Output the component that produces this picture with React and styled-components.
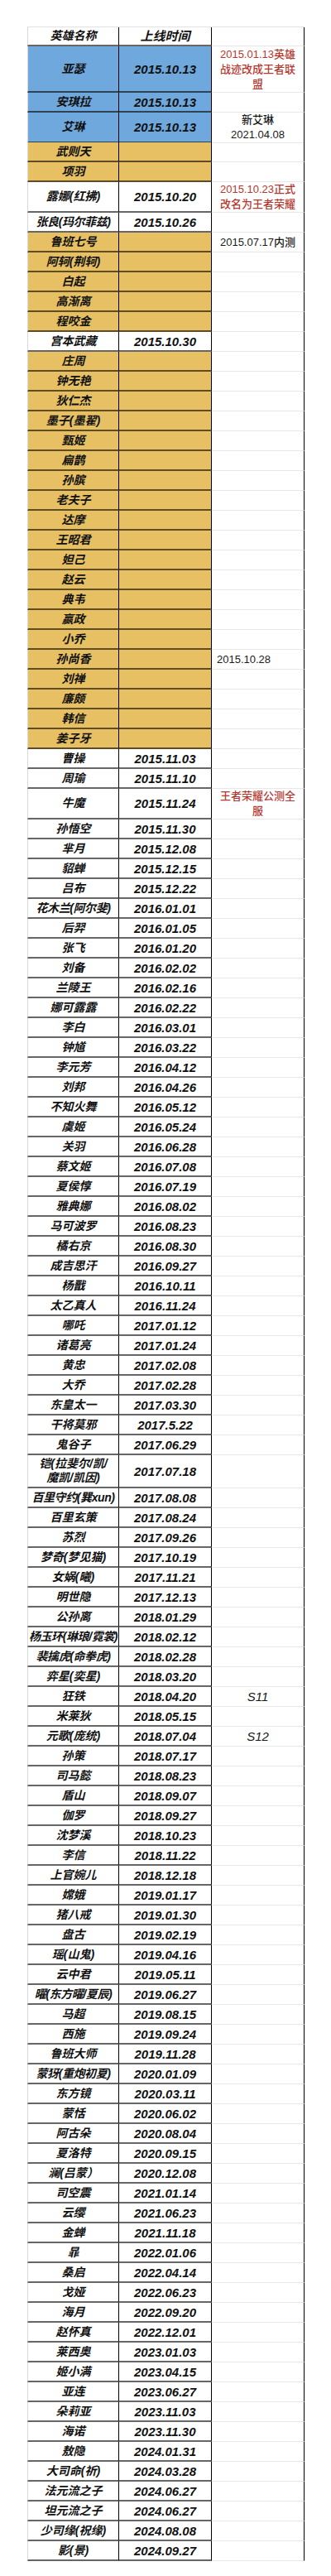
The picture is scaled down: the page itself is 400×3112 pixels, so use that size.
import React from "react";
import styled, { createGlobalStyle } from "styled-components";

const GlobalStyle = createGlobalStyle`
  html, body {
    margin: 0;
    padding: 0;
    background: #fff;
  }
  body {
    font-family: "Liberation Sans", "Noto Sans CJK SC", sans-serif;
  }
`;

const fills = {
  blue: "#6fa8dc",
  gold: "#e6c062",
  none: "#ffffff",
};

const Page = styled.div`
  padding: 32px 0 0 33px;
`;

const Sheet = styled.div`
  display: flex;
  flex-direction: column;
  width: 335px;
  border-top: 1px solid #e2e2e2;
`;

const Row = styled.div`
  display: grid;
  grid-template-columns: 111px 112px 112px;
  height: ${(p) => p.$h}px;
`;

const Cell = styled.div`
  display: flex;
  align-items: center;
  justify-content: center;
  text-align: center;
  box-sizing: border-box;
  overflow: hidden;
  background: ${(p) => fills[p.$fill || "none"]};
  border-bottom: 2px solid rgba(0, 0, 0, 0.6);
  border-right: 1px solid #000;
  font-size: 15px;
  font-style: italic;
  font-weight: 600;
  line-height: 17px;
  color: #111;
  white-space: ${(p) => (p.$wrap ? "normal" : "nowrap")};
`;

const NameCell = styled(Cell)`
  border-left: 1px solid #d8d8d8;
  font-size: 14px;
  letter-spacing: ${(p) => (p.$tight ? "-0.4px" : "0")};
`;

const NoteCell = styled.div`
  display: flex;
  align-items: center;
  justify-content: ${(p) => (p.$left ? "flex-start" : "center")};
  box-sizing: border-box;
  padding: 0 ${(p) => (p.$left ? "6px" : "3px")};
  border-bottom: 1px solid #e8e8e8;
  border-right: 1px solid #000;
  font-size: ${(p) => (p.$italic ? "15px" : "13px")};
  line-height: 18px;
  text-align: center;
  white-space: nowrap;
  font-weight: 500;
  font-style: ${(p) => (p.$italic ? "italic" : "normal")};
  color: ${(p) => (p.$red ? "#b5382f" : "#1a1a1a")};
`;

const gold = (names) => names.map((n) => ({ n, f: "gold" }));

const heroes = [
  {
    n: "亚瑟",
    d: "2015.10.13",
    f: "blue",
    h: 56,
    note: { lines: ["2015.01.13英雄", "战迹改成王者联", "盟"], red: true },
  },
  { n: "安琪拉", d: "2015.10.13", f: "blue" },
  {
    n: "艾琳",
    d: "2015.10.13",
    f: "blue",
    h: 36,
    note: { lines: ["新艾琳", "2021.04.08"] },
  },
  ...gold(["武则天", "项羽"]),
  {
    n: "露娜(红拂)",
    d: "2015.10.20",
    h: 37,
    note: { lines: ["2015.10.23正式", "改名为王者荣耀"], red: true },
  },
  { n: "张良(玛尔菲兹)", d: "2015.10.26", tight: true },
  { n: "鲁班七号", f: "gold", note: { lines: ["2015.07.17内测"] } },
  ...gold(["阿轲(荆轲)", "白起", "高渐离", "程咬金"]),
  { n: "宫本武藏", d: "2015.10.30" },
  ...gold([
    "庄周",
    "钟无艳",
    "狄仁杰",
    "墨子(墨翟)",
    "甄姬",
    "扁鹊",
    "孙膑",
    "老夫子",
    "达摩",
    "王昭君",
    "妲己",
    "赵云",
    "典韦",
    "嬴政",
    "小乔",
  ]),
  { n: "孙尚香", f: "gold", note: { lines: ["2015.10.28"], left: true } },
  ...gold(["刘禅", "廉颇", "韩信", "姜子牙"]),
  { n: "曹操", d: "2015.11.03" },
  { n: "周瑜", d: "2015.11.10" },
  {
    n: "牛魔",
    d: "2015.11.24",
    h: 37,
    note: { lines: ["王者荣耀公测全", "服"], red: true },
  },
  { n: "孙悟空", d: "2015.11.30" },
  { n: "芈月", d: "2015.12.08" },
  { n: "貂蝉", d: "2015.12.15" },
  { n: "吕布", d: "2015.12.22" },
  { n: "花木兰(阿尔斐)", d: "2016.01.01", tight: true },
  { n: "后羿", d: "2016.01.05" },
  { n: "张飞", d: "2016.01.20" },
  { n: "刘备", d: "2016.02.02" },
  { n: "兰陵王", d: "2016.02.16" },
  { n: "娜可露露", d: "2016.02.22" },
  { n: "李白", d: "2016.03.01" },
  { n: "钟馗", d: "2016.03.22" },
  { n: "李元芳", d: "2016.04.12" },
  { n: "刘邦", d: "2016.04.26" },
  { n: "不知火舞", d: "2016.05.12" },
  { n: "虞姬", d: "2016.05.24" },
  { n: "关羽", d: "2016.06.28" },
  { n: "蔡文姬", d: "2016.07.08" },
  { n: "夏侯惇", d: "2016.07.19" },
  { n: "雅典娜", d: "2016.08.02" },
  { n: "马可波罗", d: "2016.08.23" },
  { n: "橘右京", d: "2016.08.30" },
  { n: "成吉思汗", d: "2016.09.27" },
  { n: "杨戬", d: "2016.10.11" },
  { n: "太乙真人", d: "2016.11.24" },
  { n: "哪吒", d: "2017.01.12" },
  { n: "诸葛亮", d: "2017.01.24" },
  { n: "黄忠", d: "2017.02.08" },
  { n: "大乔", d: "2017.02.28" },
  { n: "东皇太一", d: "2017.03.30" },
  { n: "干将莫邪", d: "2017.5.22" },
  { n: "鬼谷子", d: "2017.06.29" },
  { n: ["铠(拉斐尔/凯/", "魔凯/凯因)"], d: "2017.07.18", h: 40 },
  { n: "百里守约(巽xun)", d: "2017.08.08", tight: true },
  { n: "百里玄策", d: "2017.08.24" },
  { n: "苏烈", d: "2017.09.26" },
  { n: "梦奇(梦见猫)", d: "2017.10.19" },
  { n: "女娲(曦)", d: "2017.11.21" },
  { n: "明世隐", d: "2017.12.13" },
  { n: "公孙离", d: "2018.01.29" },
  { n: "杨玉环(琳琅/霓裳)", d: "2018.02.12", tight: true },
  { n: "裴擒虎(命拳虎)", d: "2018.02.28", tight: true },
  { n: "弈星(奕星)", d: "2018.03.20" },
  { n: "狂铁", d: "2018.04.20", note: { lines: ["S11"], italic: true } },
  { n: "米莱狄", d: "2018.05.15" },
  { n: "元歌(庞统)", d: "2018.07.04", note: { lines: ["S12"], italic: true } },
  { n: "孙策", d: "2018.07.17" },
  { n: "司马懿", d: "2018.08.23" },
  { n: "盾山", d: "2018.09.07" },
  { n: "伽罗", d: "2018.09.27" },
  { n: "沈梦溪", d: "2018.10.23" },
  { n: "李信", d: "2018.11.22" },
  { n: "上官婉儿", d: "2018.12.18" },
  { n: "嫦娥", d: "2019.01.17" },
  { n: "猪八戒", d: "2019.01.30" },
  { n: "盘古", d: "2019.02.19" },
  { n: "瑶(山鬼)", d: "2019.04.16" },
  { n: "云中君", d: "2019.05.11" },
  { n: "曜(东方曜/夏辰)", d: "2019.06.27", tight: true },
  { n: "马超", d: "2019.08.15" },
  { n: "西施", d: "2019.09.24" },
  { n: "鲁班大师", d: "2019.11.28" },
  { n: "蒙犽(重炮初夏)", d: "2020.01.09", tight: true },
  { n: "东方镜", d: "2020.03.11" },
  { n: "蒙恬", d: "2020.06.02" },
  { n: "阿古朵", d: "2020.08.04" },
  { n: "夏洛特", d: "2020.09.15" },
  { n: "澜(吕蒙）", d: "2020.12.08" },
  { n: "司空震", d: "2021.01.14" },
  { n: "云缨", d: "2021.06.23" },
  { n: "金蝉", d: "2021.11.18" },
  { n: "暃", d: "2022.01.06" },
  { n: "桑启", d: "2022.04.14" },
  { n: "戈娅", d: "2022.06.23" },
  { n: "海月", d: "2022.09.20" },
  { n: "赵怀真", d: "2022.12.01" },
  { n: "莱西奥", d: "2023.01.03" },
  { n: "姬小满", d: "2023.04.15" },
  { n: "亚连", d: "2023.06.27" },
  { n: "朵莉亚", d: "2023.11.03" },
  { n: "海诺", d: "2023.11.30" },
  { n: "敖隐", d: "2024.01.31" },
  { n: "大司命(祈)", d: "2024.03.28" },
  { n: "法元流之子", d: "2024.06.27" },
  { n: "坦元流之子", d: "2024.06.27" },
  { n: "少司缘(祝缘)", d: "2024.08.08" },
  { n: "影(景)", d: "2024.09.27" },
];

const Lines = ({ lines }) =>
  lines.map((line, i) => (
    <React.Fragment key={i}>
      {i > 0 && <br />}
      {line}
    </React.Fragment>
  ));

const App = () => {
  return (
    <>
      <GlobalStyle />
      <Page>
        <Sheet>
          <Row $h={23}>
            <NameCell>英雄名称</NameCell>
            <Cell>上线时间</Cell>
            <NoteCell />
          </Row>
          {heroes.map((hero, i) => {
            const multi = Array.isArray(hero.n);
            return (
              <Row key={i} $h={hero.h || 24}>
                <NameCell $fill={hero.f} $wrap={multi} $tight={hero.tight}>
                  {multi ? (
                    <span>
                      <Lines lines={hero.n} />
                    </span>
                  ) : (
                    hero.n
                  )}
                </NameCell>
                <Cell $fill={hero.f}>{hero.d}</Cell>
                <NoteCell
                  $red={hero.note?.red}
                  $left={hero.note?.left}
                  $italic={hero.note?.italic}
                >
                  {hero.note && (
                    <span>
                      <Lines lines={hero.note.lines} />
                    </span>
                  )}
                </NoteCell>
              </Row>
            );
          })}
        </Sheet>
      </Page>
    </>
  );
};

export default App;
